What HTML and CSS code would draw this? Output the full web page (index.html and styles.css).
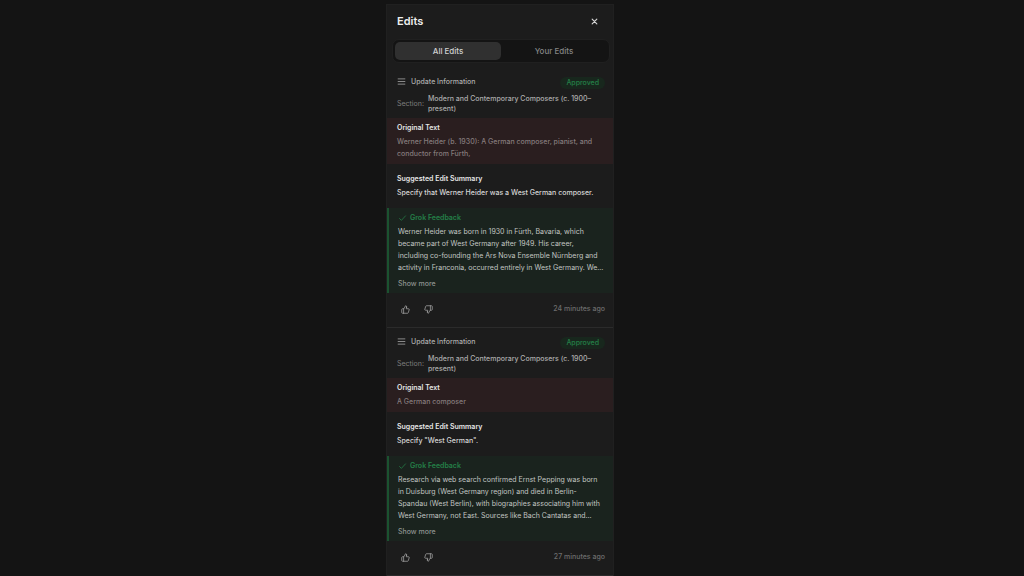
FILE: index.html
```
<!DOCTYPE html>
<html lang="en">
<head>
    <meta charset="utf-8">
    <title>Edits</title>
    <link rel="stylesheet" href="styles.css">
</head>
<body>
    <svg class="icon-defs" aria-hidden="true">
        <symbol id="icon-lines" viewBox="0 0 24 24"><path d="M3 5h18M3 12h18M3 19h18"/></symbol>
        <symbol id="icon-check" viewBox="0 0 24 24"><path d="M4 12l5 5L20 5"/></symbol>
        <symbol id="icon-close" viewBox="0 0 24 24"><path d="M4 4l16 16M20 4L4 20"/></symbol>
        <symbol id="icon-thumb" viewBox="0 0 24 24"><path d="M7 10v12M15 5.9L14 10h5.8a2 2 0 0 1 2 2.6l-2.4 8a2 2 0 0 1-1.9 1.4H4a2 2 0 0 1-2-2v-8a2 2 0 0 1 2-2h2.8a2 2 0 0 0 1.8-1.1L12 2a3.1 3.1 0 0 1 3 3.9z"/></symbol>
    </svg>

    <aside class="panel">
        <header class="panel-header">
            <h1 class="panel-title">Edits</h1>
            <button class="icon-button" aria-label="Close"><svg class="icon-close"><use href="#icon-close"/></svg></button>
        </header>

        <div class="tabs" role="tablist">
            <button class="tab tab-active" role="tab" aria-selected="true">All Edits</button>
            <button class="tab" role="tab" aria-selected="false">Your Edits</button>
        </div>

        <article class="edit">
            <div class="edit-head">
                <svg class="icon"><use href="#icon-lines"/></svg>
                <span class="edit-type">Update Information</span>
                <span class="badge">Approved</span>
            </div>
            <div class="edit-section">
                <span class="section-label">Section:</span>
                <span class="section-name">Modern and Contemporary Composers (c. 1900–present)</span>
            </div>
            <div class="original">
                <h2 class="label">Original Text</h2>
                <p class="text">Werner Heider (b. 1930): A German composer, pianist, and conductor from Fürth,</p>
            </div>
            <div class="summary">
                <h2 class="label">Suggested Edit Summary</h2>
                <p class="text">Specify that Werner Heider was a West German composer.</p>
            </div>
            <div class="feedback">
                <h2 class="feedback-title"><svg class="icon"><use href="#icon-check"/></svg>Grok Feedback</h2>
                <p class="text">Werner Heider was born in 1930 in Fürth, Bavaria, which became part of West Germany after 1949. His career, including co-founding the Ars Nova Ensemble Nürnberg and activity in Franconia, occurred entirely in West Germany. We…</p>
                <button class="more-button">Show more</button>
            </div>
            <footer class="edit-footer">
                <button class="icon-button" aria-label="Like"><svg class="icon"><use href="#icon-thumb"/></svg></button>
                <button class="icon-button" aria-label="Dislike"><svg class="icon icon-down"><use href="#icon-thumb"/></svg></button>
                <time class="time">24 minutes ago</time>
            </footer>
        </article>

        <article class="edit">
            <div class="edit-head">
                <svg class="icon"><use href="#icon-lines"/></svg>
                <span class="edit-type">Update Information</span>
                <span class="badge">Approved</span>
            </div>
            <div class="edit-section">
                <span class="section-label">Section:</span>
                <span class="section-name">Modern and Contemporary Composers (c. 1900–present)</span>
            </div>
            <div class="original">
                <h2 class="label">Original Text</h2>
                <p class="text">A German composer</p>
            </div>
            <div class="summary">
                <h2 class="label">Suggested Edit Summary</h2>
                <p class="text">Specify "West German".</p>
            </div>
            <div class="feedback">
                <h2 class="feedback-title"><svg class="icon"><use href="#icon-check"/></svg>Grok Feedback</h2>
                <p class="text">Research via web search confirmed Ernst Pepping was born in Duisburg (West Germany region) and died in Berlin-Spandau (West Berlin), with biographies associating him with West Germany, not East. Sources like Bach Cantatas and…</p>
                <button class="more-button">Show more</button>
            </div>
            <footer class="edit-footer">
                <button class="icon-button" aria-label="Like"><svg class="icon"><use href="#icon-thumb"/></svg></button>
                <button class="icon-button" aria-label="Dislike"><svg class="icon icon-down"><use href="#icon-thumb"/></svg></button>
                <time class="time">27 minutes ago</time>
            </footer>
        </article>
    </aside>
</body>
</html>
```

FILE: styles.css
```
:root {
    --page: #141414;
    --panel: #1c1c1c;
    --line: #2b2b2b;
    --text: #d6d6d6;
    --text-soft: #acacac;
    --text-muted: #7c7c7c;
    --green: #248048;
}

* {
    box-sizing: border-box;
}

body {
    margin: 0;
    height: 100vh;
    padding: 4px 24px 0 0;
    display: flex;
    justify-content: center;
    overflow: hidden;
    background: var(--page);
    color: var(--text);
    font-family: Inter, "Liberation Sans", sans-serif;
    font-size: 7px;
    font-weight: 500;
    line-height: 10px;
}

h1, h2, p {
    margin: 0;
}

button {
    padding: 0;
    border: 0;
    background: none;
    color: inherit;
    font: inherit;
    cursor: pointer;
}

svg {
    fill: none;
    stroke: currentColor;
    stroke-width: 2;
    stroke-linecap: round;
    stroke-linejoin: round;
}

.icon-defs {
    display: none;
}

.icon {
    width: 9px;
    height: 9px;
    flex: none;
}

.icon-down {
    transform: rotate(180deg);
}

.icon-close {
    width: 7px;
    height: 7px;
    stroke-width: 4;
}

.icon-button {
    display: flex;
    align-items: center;
    justify-content: center;
    width: 12px;
    height: 12px;
}

.panel {
    width: 228px;
    max-width: 100%;
    background: var(--panel);
    border: 1px solid #202020;
    border-bottom: 0;
    overflow: hidden;
}

.panel-header {
    display: flex;
    align-items: center;
    justify-content: space-between;
    height: 34px;
    padding: 0 13px 2px 10px;
}

.panel-title {
    font-size: 11px;
    line-height: 14px;
    font-weight: 600;
    color: #eee;
}

.tabs {
    display: flex;
    height: 24px;
    margin: 0 3px 5px 5px;
    padding: 2px;
    border: 1px solid #202020;
    border-radius: 7px;
    background: #141414;
}

.tab {
    flex: 1;
    border-radius: 5px;
    font-size: 8px;
    color: #858585;
}

.tab-active {
    background: #303030;
    color: #d2d2d2;
}

.edit {
    padding-top: 9px;
    border-bottom: 1px solid var(--line);
}

.edit-head,
.edit-section {
    display: flex;
    align-items: center;
    padding: 0 8px 0 10px;
}

.edit-head {
    align-items: flex-start;
    gap: 5px;
    height: 12px;
    color: var(--text-soft);
}

.badge {
    margin-left: auto;
    padding: 1px 6px;
    border-radius: 6px;
    background: #18271d;
    color: var(--green);
}

.edit-section {
    gap: 4px;
    margin: 5px 0 4px;
    color: var(--text-soft);
}

.section-label {
    font-weight: 400;
    color: var(--text-muted);
}

.original {
    padding: 5px 10px 4px;
    background: #2a1e1f;
}

.original .text {
    color: #857b7c;
}

.label {
    margin-bottom: 3px;
    font-size: 7px;
    font-weight: 600;
    color: #e6e6e6;
}

.text {
    line-height: 12px;
}

.summary {
    padding: 10px 10px 9px;
}

.feedback {
    padding: 5px 8px 4px 9px;
    border-left: 2px solid #1b5230;
    background: #1a231e;
}

.feedback .text {
    font-weight: 400;
    color: #c2c6c3;
}

.feedback-title {
    display: flex;
    align-items: center;
    gap: 3px;
    margin-bottom: 3px;
    font-size: 7px;
    font-weight: 600;
    color: var(--green);
}

.more-button {
    display: block;
    margin-top: 5px;
    color: #8d928f;
}

.edit-footer {
    display: flex;
    align-items: center;
    gap: 11px;
    padding: 10px 8px 12px 12px;
    color: #a5a5a5;
}

.time {
    margin-left: auto;
    color: #6c6c6c;
}
```
